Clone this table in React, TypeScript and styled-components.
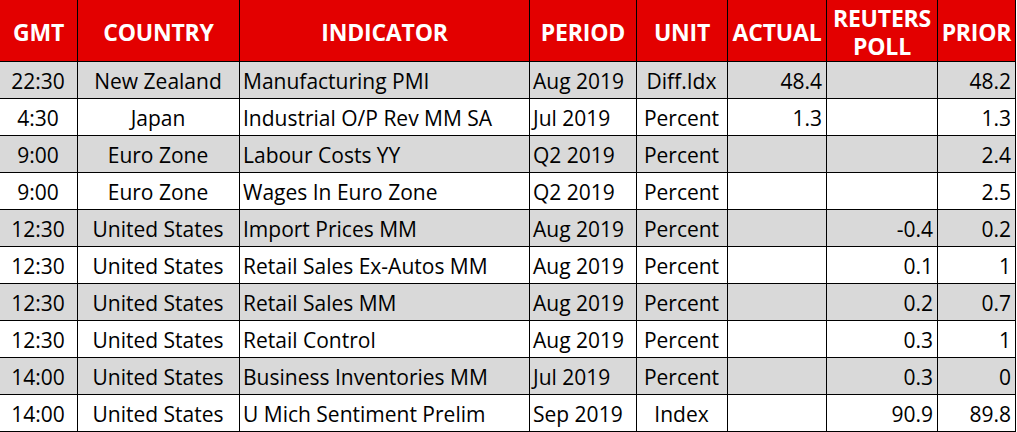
import React from "react";
import styled, { createGlobalStyle } from "styled-components";

const Global = createGlobalStyle`
  html, body { margin: 0; padding: 0; background: #ffffff; }
  body { font-family: "Open Sans", "Noto Sans", sans-serif; }
`;

type Align = "left" | "center" | "right";

const Grid = styled.div`
  display: grid;
  grid-template-columns: 77px 161px 289px 106px 90px 98px 110px 77px;
  grid-template-rows: 61px;
  grid-auto-rows: 36px;
  gap: 1px;
  background: #000;
  width: 1016px;
  border-bottom: 1px solid #000;
  box-sizing: border-box;
  padding-right: 1px;
`;

const HeadCell = styled.div`
  background: #e30000;
  color: #fff;
  font-weight: 700;
  font-size: 23px;
  line-height: 28px;
  display: flex;
  align-items: center;
  justify-content: center;
  text-align: center;
  letter-spacing: -0.2px;
  white-space: nowrap;
  padding-top: 2px;
  box-sizing: border-box;
`;

const Cell = styled.div<{ $align: Align; $shade: boolean }>`
  background: ${(p) => (p.$shade ? "#d9d9d9" : "#ffffff")};
  color: #000;
  font-size: 21px;
  display: flex;
  align-items: center;
  justify-content: ${(p) =>
    p.$align === "left" ? "flex-start" : p.$align === "right" ? "flex-end" : "center"};
  padding: 2px 4px 0 3px;
  white-space: nowrap;
  overflow: hidden;
  box-sizing: border-box;
`;

const headers = ["GMT", "COUNTRY", "INDICATOR", "PERIOD", "UNIT", "ACTUAL", "REUTERS POLL", "PRIOR"];
const aligns: Align[] = ["center", "center", "left", "left", "center", "right", "right", "right"];

const rows: string[][] = [
  ["22:30", "New Zealand", "Manufacturing PMI", "Aug 2019", "Diff.Idx", "48.4", "", "48.2"],
  ["4:30", "Japan", "Industrial O/P Rev MM SA", "Jul 2019", "Percent", "1.3", "", "1.3"],
  ["9:00", "Euro Zone", "Labour Costs YY", "Q2 2019", "Percent", "", "", "2.4"],
  ["9:00", "Euro Zone", "Wages In Euro Zone", "Q2 2019", "Percent", "", "", "2.5"],
  ["12:30", "United States", "Import Prices MM", "Aug 2019", "Percent", "", "-0.4", "0.2"],
  ["12:30", "United States", "Retail Sales Ex-Autos MM", "Aug 2019", "Percent", "", "0.1", "1"],
  ["12:30", "United States", "Retail Sales MM", "Aug 2019", "Percent", "", "0.2", "0.7"],
  ["12:30", "United States", "Retail Control", "Aug 2019", "Percent", "", "0.3", "1"],
  ["14:00", "United States", "Business Inventories MM", "Jul 2019", "Percent", "", "0.3", "0"],
  ["14:00", "United States", "U Mich Sentiment Prelim", "Sep 2019", "Index", "", "90.9", "89.8"],
];

export default function App() {
  return (
    <>
      <Global />
      <Grid>
        {headers.map((h) => (
          <HeadCell key={h}>
            {h === "REUTERS POLL" ? (
              <span>
                REUTERS
                <br />
                POLL
              </span>
            ) : (
              h
            )}
          </HeadCell>
        ))}
        {rows.map((r, i) =>
          r.map((v, j) => (
            <Cell key={`${i}-${j}`} $align={aligns[j]} $shade={i % 2 === 0}>
              {v}
            </Cell>
          ))
        )}
      </Grid>
    </>
  );
}
